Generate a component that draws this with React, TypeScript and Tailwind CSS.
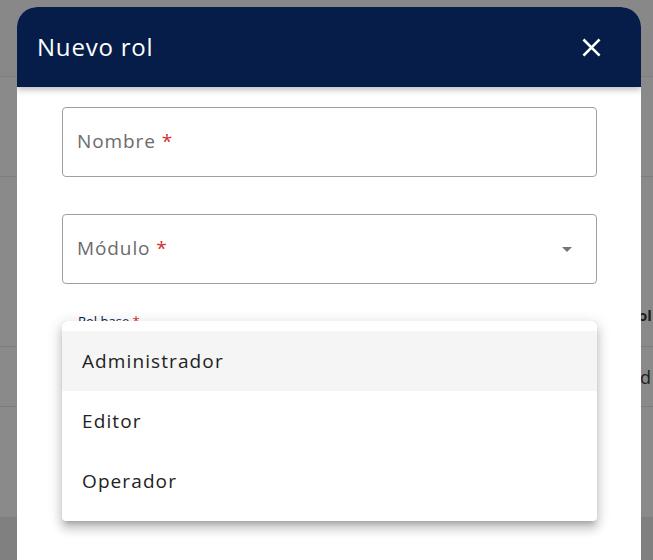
import { useState } from 'react'

const roles = ['Administrador', 'Editor', 'Operador']

function ArrowDropDown() {
  return (
    <svg width="24" height="24" viewBox="0 0 24 24" className="fill-[#757575]">
      <path d="M7 10l5 5 5-5z" />
    </svg>
  )
}

function CloseIcon() {
  return (
    <svg width="19" height="19" viewBox="0 0 20 20" fill="none" stroke="white" strokeWidth="2.8" strokeLinecap="square">
      <path d="M2.5 2.5L17.5 17.5M17.5 2.5L2.5 17.5" />
    </svg>
  )
}

// Page behind the modal, already dimmed by the backdrop
function BackgroundPage() {
  return (
    <div className="absolute inset-0 flex flex-col bg-[#8a8a8a]">
      <div className="h-[77px] bg-[#888888] border-b border-[#7d7d7d]" />
      <div className="h-[100px] border-b border-[#7d7d7d]" />
      <div className="h-[170px] border-b border-[#7d7d7d] flex items-end justify-end pb-[20px]">
        <span className="text-[15px] font-bold text-[#1e1e1e] w-[15px] overflow-hidden">ol</span>
      </div>
      <div className="h-[60px] border-b border-[#7d7d7d] flex items-center justify-end pt-[2px]">
        <span className="text-[18px] text-[#1e1e1e] w-[13px] overflow-hidden">d</span>
      </div>
      <div className="h-[110px]" />
      <div className="flex-1 bg-[#808080]" />
    </div>
  )
}

function OutlinedField({ label, select }: { label: string; select?: boolean }) {
  return (
    <div className="h-[70px] rounded-[4px] border border-[#a0a0a0] flex items-center pl-[14px] pr-[17px]">
      <span className="flex-1 text-[19px] tracking-[0.9px] text-[#6b6b6b] pb-[1px]">
        {label} <span className="text-[#d32f2f]">*</span>
      </span>
      {select && <ArrowDropDown />}
    </div>
  )
}

export default function App() {
  const [hover] = useState(0)

  return (
    <div className="relative w-[653px] h-[560px] overflow-hidden font-['Open_Sans',sans-serif]">
      <BackgroundPage />

      {/* Dialog */}
      <div className="absolute left-[17px] top-[7px] w-[624px] h-[600px] bg-white rounded-t-[20px] overflow-hidden flex flex-col">
        <div className="h-[80px] shrink-0 bg-[#051d48] flex items-center justify-between pl-[20px] pr-[40px] shadow-[0_3px_6px_rgba(0,0,0,0.25)] relative z-10">
          <h2 className="text-[24px] text-white tracking-[0.8px] pb-[1px]">Nuevo rol</h2>
          <CloseIcon />
        </div>

        <div className="flex flex-col pl-[45px] pr-[44px] pt-[20px] gap-[37px]">
          <OutlinedField label="Nombre" />
          <OutlinedField label="Módulo" select />
          <div className="relative h-[70px] rounded-[4px] border border-[#051d48]">
            <span className="absolute -top-[9px] left-[10px] bg-white px-[5px] text-[13px] leading-[16px] text-[#051d48]">
              Rol base <span className="text-[#d32f2f]">*</span>
            </span>
          </div>
        </div>
      </div>

      {/* Select menu */}
      <div className="absolute left-[62px] top-[321px] w-[535px] bg-white rounded-[4px] py-[10px] shadow-[0_5px_5px_-3px_rgba(0,0,0,0.2),0_8px_10px_1px_rgba(0,0,0,0.14),0_3px_14px_2px_rgba(0,0,0,0.12)]">
        {roles.map((r, i) => (
          <div
            key={r}
            className={`h-[60px] flex items-center pl-[20px] text-[19px] tracking-[1.1px] text-[#222222] ${i === hover ? 'bg-[#f5f5f5]' : ''}`}
          >
            {r}
          </div>
        ))}
      </div>
    </div>
  )
}
